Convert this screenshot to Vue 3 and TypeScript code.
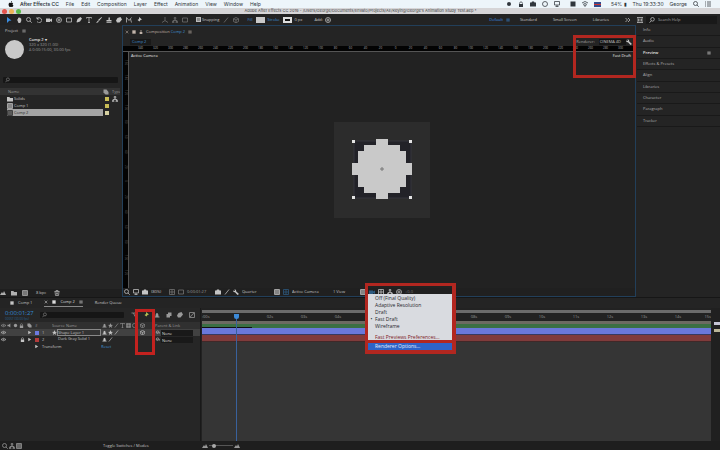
<script setup lang="ts">
import { h, ref } from 'vue'

type Glyph = { d: string; solid?: boolean }

const glyphs: Record<string, Glyph> = {
  apple: { d: 'M8 0C8 2 7 3 6 3C6 1 7 0 8 0ZM6 4C8 2.600 10 3.500 10.500 4.500C8.500 6 9 8 11 9C10 11 9 12 8 12C7 12 7 11.500 6 11.500C5 11.500 5 12 4 12C2 12 0 6 2 4.300C3.500 3 5 4 6 4Z', solid: true },
  arrow: { d: 'M2 0L11 7L6.500 7.500L2 12Z', solid: true },
  hand: { d: 'M2 5L3 4L4 6V2L5 1L6 2L7 0.500L8 2L9 1.500L9.500 3L10.500 3.500V8L8.500 12H5Z', solid: true },
  zoom: { d: 'M5 1A4 4 0 1 0 5 9A4 4 0 1 0 5 1M8 8L11.500 11.500' },
  search: { d: 'M7 1A3.600 3.600 0 1 1 7 8.200A3.600 3.600 0 1 1 7 1M4.500 7.500L1 11.500' },
  rotate: { d: 'M2 4A5 5 0 1 1 2 9M2 0V4H6' },
  camera: { d: 'M0 3H8V5L12 3V10L8 8V10H0Z', solid: true },
  target: { d: 'M6 1A5 5 0 1 0 6 11A5 5 0 1 0 6 1M6 3V9M3 6H9' },
  rect: { d: 'M1 2H11V10H1Z' },
  pen: { d: 'M9 0L12 3L8 9L2 11L1 10L3 4ZM1 11L6 6', solid: true },
  type: { d: 'M1 3V1H11V3M6 1V11M4 11H8' },
  brush: { d: 'M11 0L12 1L6 8L4 6ZM4 7L5.500 9Q4 12 0 11.500Q2 10 4 7Z', solid: true },
  stamp: { d: 'M5 1H8L7.500 6H11V9H1V6H5ZM1 10H11V11.500H1Z', solid: true },
  eraser: { d: 'M3 2L9 0L12 5L7 11H2L0 7Z', solid: true },
  roto: { d: 'M1 11V1L6 7L11 1M9 4L11 11' },
  pin: { d: 'M6 0L12 5L9 6L7 9L3 6L6 4ZM4 7L1 12', solid: true },
  axis: { d: 'M6 7V0M6 7L0 11M6 7L12 11' },
  nodes: { d: 'M6 4V7M2 9V7H10V9M4.500 1H7.500V4H4.500ZM.800 9H3.800V11.500H.800ZM8 9H11V11.500H8Z' },
  square: { d: 'M1 1H11V11H1Z', solid: true },
  circle: { d: 'M6 1A5 5 0 1 0 6 11A5 5 0 1 0 6 1Z' },
  dot: { d: 'M6 2A4 4 0 1 0 6 10A4 4 0 1 0 6 2Z', solid: true },
  menu: { d: 'M1 3H11M1 6H11M1 9H11' },
  list: { d: 'M0 2H2M4 2H12M0 6H2M4 6H12M0 10H2M4 10H12' },
  close: { d: 'M2 2L10 10M10 2L2 10' },
  more: { d: 'M1 2L5 6L1 10M6 2L10 6L6 10' },
  panel: { d: 'M0 1H12V11H0ZM3 3V9M6 3V9M9 3V9' },
  folder: { d: 'M0 2H5L6 4H12V11H0Z', solid: true },
  comp: { d: 'M1 1H11V11H1ZM4 1V11M8 1V11M1 4H11M1 8H11' },
  tag: { d: 'M1 1H7L11 6V11H5L1 7Z', solid: true },
  trash: { d: 'M1 3H11M4 3V1H8V3M2 3L3 11H9L10 3M5 5V9M7 5V9' },
  screen: { d: 'M1 1H11V8H1ZM6 8V11M3 11H9' },
  snapshot: { d: 'M0 3H3L4 1H8L9 3H12V11H0Z', solid: true },
  wrench: { d: 'M3 0L4 3L3 4L0 3Q0 7 4 6.500L9 12L12 10L6.500 5Q7 1 3 0Z', solid: true },
  grid: { d: 'M1 1H11V11H1ZM6 1V11M1 6H11' },
  eye: { d: 'M0 6Q6 0 12 6Q6 12 0 6M6 4V8' },
  lock: { d: 'M2 6H10V12H2ZM3 6V3Q6-1 9 3V6H8V3.500Q6 1.500 4 3.500V6Z', solid: true },
  speaker: { d: 'M1 4H4L8 1V11L4 8H1Z', solid: true },
  star: { d: 'M6 0L7.500 4L12 4.500L8.500 7L10 12L6 9L2 12L3.500 7L0 4.500L4.500 4Z', solid: true },
  slash: { d: 'M2 11L10 1' },
  cube: { d: 'M6 1L11 3.500V9L6 11.500L1 9V3.500ZM1 3.500L6 6L11 3.500M6 6V11' },
  right: { d: 'M3 2L10 6L3 10Z', solid: true },
  swirl: { d: 'M6 6Q8 4 8 7Q6 10 3 7Q2 2 7 2Q12 4 10 9' },
  graph: { d: 'M1 1H11V11H1ZM2 9Q5 9 6 6Q7 3 10 3' },
  shy: { d: 'M1 9H11V11H1ZM3 9Q3 2 6 2Q9 2 9 9Z', solid: true },
  blur: { d: 'M4 1H11V8H8V11H1V4H4Z', solid: true },
  flow: { d: 'M1 2H5L8 9H11M5 2L8 2' },
  wifi: { d: 'M0 4Q6-2 12 4M2 7Q6 3 10 7M4 9Q6 7 8 9L6 11Z' },
  mountain: { d: 'M0 10L4 4L6 7L8 2L12 10Z', solid: true },
}

const Ico = (props: { n: string }) => {
  const g = glyphs[props.n]
  return h('svg', { viewBox: '0 0 12 12', class: 'ico', 'aria-hidden': 'true' }, [
    h('path', { d: g.d, fill: g.solid ? 'currentColor' : 'none', stroke: g.solid ? 'none' : 'currentColor', 'stroke-width': 1.5 }),
  ])
}
Ico.props = ['n']

const menus = ['File', 'Edit', 'Composition', 'Layer', 'Effect', 'Animation', 'View', 'Window', 'Help']
const tools = ['arrow', 'hand', 'zoom', 'rotate', 'camera', 'target', 'rect', 'pen', 'type', 'brush', 'stamp', 'eraser', 'roto', 'pin']
const workspaces = ['Standard', 'Small Screen', 'Libraries']
const panels = ['Info', 'Audio', 'Preview', 'Effects & Presets', 'Align', 'Libraries', 'Character', 'Paragraph', 'Tracker']
const assets = [
  { name: 'Solids', icon: 'folder' },
  { name: 'Comp 1', icon: 'comp' },
  { name: 'Comp 2', icon: 'comp' },
]
const viewMarks = Array.from({ length: 33 }, (_, i) => Math.abs(i * 20 - 340))
const sideMarks = Array.from({ length: 15 }, (_, i) => Math.abs(i * 20 - 160))
const timeMarks = [':00s', '', '02s', '03s', '04s', '', '', '', '08s', '09s', '10s', '11s', '12s', '13s', '14s', '15s']
const layers = [
  { id: 1, name: 'Shape Layer 1', color: 'blue' },
  { id: 2, name: 'Dark Gray Solid 1', color: 'red' },
]
const previewModes = ['Off (Final Quality)', 'Adaptive Resolution', 'Draft', 'Fast Draft', 'Wireframe']
const mode = ref('Fast Draft')
const selectedAsset = ref('Comp 2')
const snapping = ref(true)
</script>

<template>
  <div class="app">
    <header class="menubar">
      <Ico n="apple" class="apple" />
      <nav class="menus">
        <button class="brand">After Effects CC</button>
        <button v-for="m in menus" :key="m">{{ m }}</button>
      </nav>
      <div class="status">
        <div class="tray"><Ico n="dot" /><Ico n="lock" /><Ico n="snapshot" /><Ico n="circle" /><Ico n="screen" /></div>
        <div class="tray"><Ico n="square" /><Ico n="wifi" /><span class="flag"></span></div>
        <span>54% ▮</span>
        <span>Thu 19:33:30</span>
        <span>George</span>
        <div class="tray"><Ico n="zoom" /><Ico n="list" /></div>
      </div>
    </header>

    <div class="titlebar">
      <span class="light close"></span><span class="light mini"></span><span class="light full"></span>
      <span class="doc">Adobe After Effects CC 2019 - /Users/George/Documents/Envato/Projects/AE/Keying/George's Animation Study Test.aep *</span>
    </div>

    <div class="toolbar">
      <div class="tools">
        <button v-for="t in tools" :key="t" :class="{ on: t === 'arrow' }" :aria-label="t"><Ico :n="t" /></button>
      </div>
      <div class="tools dim"><Ico n="axis" /><Ico n="nodes" /><Ico n="rect" /></div>
      <label class="snap"><input v-model="snapping" type="checkbox" />Snapping</label>
      <div class="tools dim snapopts"><Ico n="slash" /><Ico n="cube" /></div>
      <div class="paint">
        <a href="#">Fill</a><button class="swatch" aria-label="Fill colour"></button>
        <a href="#">Stroke</a><button class="swatch stroke" aria-label="Stroke colour"></button>
        <span>0 px</span>
      </div>
      <div class="add">Add: <Ico n="target" /></div>
      <nav class="spaces">
        <button class="on">Default <Ico n="menu" /></button>
        <button v-for="w in workspaces" :key="w">{{ w }}</button>
        <span class="extras"><Ico n="more" /><Ico n="panel" /></span>
      </nav>
      <label class="help"><Ico n="search" /><input type="text" placeholder="Search Help" aria-label="Search Help" /></label>
    </div>

    <main class="work">
      <section class="project">
        <div class="phead">Project <Ico n="menu" /></div>
        <div class="info">
          <span class="thumb"></span>
          <div><b>Comp 2 ▾</b><p>320 x 320 (1.00)</p><p>Δ 0:00:15:00, 30.00 fps</p></div>
        </div>
        <label class="find"><Ico n="search" /><input type="text" aria-label="Search project" /></label>
        <table class="assets">
          <colgroup><col /><col class="ctag" /><col class="ctype" /></colgroup>
          <thead><tr><th>Name</th><th><Ico n="tag" /></th><th>Type</th></tr></thead>
          <tbody>
            <tr v-for="a in assets" :key="a.name" :class="{ sel: a.name === selectedAsset }" @click="selectedAsset = a.name">
              <td><span class="asset"><Ico :n="a.icon" />{{ a.name }}</span></td>
              <td><span class="chip"></span></td>
              <td><Ico v-if="a.icon === 'folder'" n="nodes" /></td>
            </tr>
          </tbody>
        </table>
        <div class="pfoot"><Ico n="mountain" /><Ico n="folder" /><Ico n="comp" /><span>8 bpc</span><Ico n="trash" /></div>
      </section>

      <section class="viewer">
        <div class="vtabs"><Ico n="close" /><Ico n="square" /><Ico n="lock" /><span>Composition <a href="#">Comp 2</a></span><Ico n="menu" /></div>
        <div class="crumbs">
          <button class="crumb">Comp 2</button>
          <span class="renderer">Renderer:</span><button class="engine">CINEMA 4D</button><Ico n="wrench" />
        </div>
        <div class="hruler"><span v-for="(m, i) in viewMarks" :key="i">{{ m }}</span></div>
        <div class="stage">
          <div class="vruler"><span v-for="(m, i) in sideMarks" :key="i">{{ m }}</span></div>
          <div class="canvas">
            <div class="labels"><span>Active Camera</span><span>Fast Draft</span></div>
            <svg class="art" viewBox="0 0 96 96" role="img" aria-label="Pixelated circle">
              <rect width="96" height="96" fill="#2c2c2c" />
              <rect x="20" y="19" width="57" height="57" fill="#222228" stroke="#34343c" />
              <path fill="#c9c9c9" d="M42 17h12v6h12v6h6v12h6v12h-6v12h-6v6h-12v6h-12v-6h-12v-6h-6v-12h-6v-12h6v-12h6v-6h12z" />
              <path fill="#e4e4e4" d="M18 18h3v3h-3zM75 18h3v3h-3zM18 74h3v3h-3zM75 74h3v3h-3z" />
              <path stroke="#777" fill="none" d="M46 47h4M48 45v4" />
            </svg>
          </div>
        </div>
        <div class="vbar">
          <div class="vgroup"><Ico n="zoom" /><Ico n="screen" /><Ico n="snapshot" /></div>
          <select class="zoomsel" aria-label="Magnification"><option>(80%)</option></select>
          <div class="vgroup dim"><Ico n="grid" /><Ico n="rect" /></div>
          <button class="tc">0:00:01:27</button>
          <div class="vgroup"><Ico n="snapshot" /><Ico n="slash" /><Ico n="wrench" /></div>
          <select class="res" aria-label="Resolution"><option>Quarter</option></select>
          <div class="vgroup"><Ico n="comp" /><Ico n="grid" class="teal" /></div>
          <select class="cam" aria-label="Camera"><option>Active Camera</option></select>
          <select class="views" aria-label="View layout"><option>1 View</option></select>
          <div class="vgroup previews"><Ico n="comp" /><Ico n="camera" class="teal" /><Ico n="grid" /><Ico n="nodes" /><Ico n="target" /></div>
          <span class="dim">+0.0</span>
        </div>
        <div class="mark renderer-mark"></div>
        <div class="popup" role="menu">
          <button v-for="p in previewModes" :key="p" role="menuitemradio" :aria-checked="p === mode" @click="mode = p">
            <i>{{ p === mode ? '•' : '' }}</i>{{ p }}
          </button>
          <button class="prefs" role="menuitem"><i></i>Fast Previews Preferences...</button>
          <button class="chosen" role="menuitem"><i></i>Renderer Options...</button>
        </div>
        <div class="mark popup-mark"></div>
      </section>

      <aside class="side">
        <button v-for="p in panels" :key="p" :class="{ on: p === 'Preview' }">{{ p }}<Ico v-if="p === 'Preview'" n="menu" /></button>
      </aside>
    </main>

    <section class="timeline">
      <div class="tabs">
        <button><Ico n="square" />Comp 1</button>
        <button class="on"><Ico n="close" /><Ico n="square" />Comp 2 <Ico n="menu" /></button>
        <button>Render Queue</button>
      </div>
      <div class="tbody">
        <div class="left">
          <div class="thead">
            <div class="clock"><b>0:00:01:27</b><small>00057 (30.00 fps)</small></div>
            <label class="find"><Ico n="search" /><input type="text" aria-label="Search layers" /></label>
            <div class="tools2"><Ico n="flow" /><Ico n="pin" class="lime" /><Ico n="shy" /><Ico n="blur" /><Ico n="eraser" /><Ico n="graph" /></div>
          </div>
          <table class="layers">
            <colgroup><col class="c-av" /><col class="c-id" /><col class="c-name" /><col class="c-sw" /><col class="c-3d" /><col class="c-par" /></colgroup>
            <thead>
              <tr>
                <th><span class="icons"><Ico n="eye" /><Ico n="speaker" /><Ico n="dot" /><Ico n="lock" /></span></th>
                <th><span class="icons"><Ico n="tag" />#</span></th>
                <th>Source Name</th>
                <th><span class="icons"><Ico n="shy" /><Ico n="star" /><Ico n="slash" /><Ico n="type" /><Ico n="comp" /><Ico n="circle" /></span></th>
                <th><Ico n="cube" /></th>
                <th>Parent &amp; Link</th>
              </tr>
            </thead>
            <tbody>
              <tr v-for="l in layers" :key="l.id" :class="{ sel: l.id === 1 }">
                <td><span class="icons"><Ico n="eye" /><Ico v-if="l.id === 2" n="lock" class="push" /></span></td>
                <td><span class="icons"><Ico n="right" /><span class="chip" :class="l.color"></span>{{ l.id }}</span></td>
                <td><span class="lname" :class="{ boxed: l.id === 1 }"><Ico v-if="l.id === 1" n="star" /><em>{{ l.name }}</em></span></td>
                <td><span class="icons"><Ico n="shy" /><Ico v-if="l.id === 1" n="star" /><Ico n="slash" /></span></td>
                <td><Ico v-if="l.id === 1" n="cube" /></td>
                <td><span class="parent"><Ico n="swirl" /><select :aria-label="'Parent of ' + l.name"><option>None</option></select></span></td>
              </tr>
              <tr class="prop">
                <td></td>
                <td colspan="2"><span class="transform"><Ico n="right" />Transform</span></td>
                <td colspan="3"><a href="#">Reset</a></td>
              </tr>
            </tbody>
          </table>
          <div class="mark switch-mark"></div>
        </div>
        <div class="right">
          <div class="nav"></div>
          <div class="seconds"><span v-for="(s, i) in timeMarks" :key="i">{{ s }}</span></div>
          <div class="area"></div>
          <div class="cache"></div>
          <div class="bar blue"></div>
          <div class="bar red"></div>
          <div class="tracks"></div>
          <div class="playhead"></div>
        </div>
        <div class="gutter"><span class="knob"></span><span class="knob warm"></span></div>
      </div>
      <footer class="tfoot">
        <div class="tf-left"><Ico n="zoom" /><Ico n="nodes" /><Ico n="comp" /></div>
        <button>Toggle Switches / Modes</button>
        <div class="scale"><Ico n="mountain" /><input type="range" value="14" aria-label="Timeline zoom" /><Ico n="mountain" /></div>
      </footer>
    </section>
  </div>
</template>

<style>
body {
  margin: 0;
  background: #222;
}
</style>

<style scoped>
* { box-sizing: border-box; }
.app {
  min-height: 100vh;
  display: flex;
  flex-direction: column;
  background: #222;
  color: #c4c4c4;
  font: 4px/6px "Open Sans", "Noto Sans", sans-serif;
  overflow: hidden;
}
button, input, select {
  font: inherit;
  color: inherit;
  background: none;
  border: 0;
  padding: 0;
  margin: 0;
  border-radius: 0;
  appearance: none;
  min-width: 0;
  outline: 0;
}
button { white-space: nowrap; text-align: left; }
a { color: #3f8fd2; text-decoration: none; }
p { margin: 0; }
.ico { width: 6px; height: 6px; flex: none; display: block; }
.dim { color: #666; }
.teal { color: #2c5a80; }
.lime { color: #b5bd54; }

.menubar {
  height: 8px;
  display: flex;
  align-items: center;
  padding: 0 9px 0 8px;
  background: #edf5fa;
  color: #30363c;
  font-family: Inter, sans-serif;
  font-size: 5px;
  line-height: 8px;
}
.apple { margin-right: 6px; color: #111; }
.menus { display: flex; gap: 7px; }
.brand { font-weight: 600; }
.status { margin-left: auto; display: flex; align-items: center; gap: 6px; white-space: nowrap; }
.tray { display: flex; align-items: center; gap: 6px; margin-right: 4px; }
.status > .tray:last-child { margin: 0; }
.flag { width: 7px; height: 5px; background: linear-gradient(#354a8a 33%, #c33 33% 66%, #354a8a 66%); }

.titlebar {
  height: 6px;
  display: flex;
  align-items: center;
  gap: 2px;
  padding: 0 22px 0 2px;
  background: #d6d5d7;
  color: #444;
  font-family: Inter, sans-serif;
}
.light { width: 5px; height: 5px; border-radius: 50%; background: #e4544c; }
.mini { background: #ecb456; }
.full { background: #57b947; }
.doc { flex: 1; text-align: center; white-space: nowrap; }

.toolbar {
  height: 11px;
  display: flex;
  align-items: center;
  background: #232323;
  padding: 0 3px 0 6px;
  white-space: nowrap;
}
.tools { display: flex; gap: 4px; color: #c4c4c4; }
.tools.dim { color: #737373; margin-left: 20px; }
.tools.dim.snapopts { margin-left: 4px; }
.tools .on { color: #3b8de0; }
.snap { display: flex; align-items: center; gap: 1px; margin-left: 8px; }
.snap input { width: 5px; height: 5px; border: 1px solid #bbb; }
.snap input:checked { background: #888; }
.paint { display: flex; align-items: center; gap: 3px; margin-left: 8px; }
.swatch { width: 9px; height: 6px; background: #c9c9c9; }
.swatch.stroke { background: #111; border: 2px solid #ddd; }
.add { display: flex; align-items: center; gap: 2px; margin-left: 12px; }
.spaces { display: flex; align-items: center; gap: 16px; margin-left: auto; }
.extras { display: flex; gap: 6px; }
.spaces .on { display: flex; align-items: center; gap: 3px; color: #3b8de0; }
.spaces .on .ico { width: 4px; height: 4px; margin-right: -6px; }
.help { display: flex; align-items: center; gap: 3px; width: 71px; height: 8px; margin-left: 3px; padding: 0 3px; background: #191919; }
.help input { flex: 1; }
.help input::placeholder { color: #aaa; opacity: 1; }

.work {
  height: 272px;
  display: grid;
  grid-template-columns: 122px minmax(0, 1fr) 84px;
  grid-template-rows: minmax(0, 1fr);
  background: #242424;
}

.project { display: flex; flex-direction: column; background: #252525; overflow: hidden; }
.phead { display: flex; align-items: center; gap: 4px; height: 11px; padding-left: 5px; }
.phead .ico { width: 4px; }
.info { display: flex; gap: 5px; height: 41px; padding: 1px 0 0 5px; line-height: 5px; color: #9a9a9a; }
.info b { color: #e4e4e4; font-weight: 600; }
.thumb { width: 19px; height: 19px; margin-top: 3px; border-radius: 50%; background: #c9c9c9; }
.find { display: flex; align-items: center; height: 6px; background: #161616; border-radius: 1px; padding-left: 2px; color: #888; }
.find .ico { width: 5px; }
.find input { flex: 1; height: 5px; }
.project .find { margin: 0 4px 5px 3px; }
table { border-collapse: collapse; table-layout: fixed; width: 100%; }
th, td { padding: 0; height: 7px; font-weight: 400; text-align: left; white-space: nowrap; overflow: hidden; }
.assets { width: 120px; line-height: 7px; }
.assets .ctag { width: 9px; }
.assets .ctype { width: 8px; }
.assets thead { background: #333; color: #999; }
.assets th:first-child { padding-left: 8px; }
.asset { display: flex; align-items: center; gap: 1px; margin-left: 7px; }
.assets td:nth-child(2) { padding-left: 2px; }
.assets .sel .asset { background: #a4a4a4; color: #2a2a2a; }
.chip { display: block; width: 4px; height: 4px; background: #c9bd56; }
.sel .chip { background: #d6d0a0; }
.pfoot { display: flex; align-items: center; gap: 5px; margin-top: auto; height: 8px; background: #1f1f1f; }
.pfoot .ico { color: #b0b0b0; }
.pfoot span { padding: 0 3px; }

.viewer { position: relative; display: flex; flex-direction: column; border: 1px solid #223f5a; background: #242424; }
.vtabs { display: flex; align-items: center; gap: 3px; height: 11px; padding-left: 2px; color: #c2b4aa; }
.vtabs .ico { width: 4px; }
.crumbs { display: flex; align-items: center; height: 9px; padding: 0 3px 0 7px; }
.crumb { color: #3f8fd2; background: #191919; padding: 0 5px 0 2px; }
.renderer { margin-left: auto; margin-right: 4px; color: #aaa; }
.engine { background: #151515; padding: 0 5px 0 1px; }
.hruler {
  display: flex;
  height: 6px;
  padding-left: 10px;
  overflow: hidden;
  background: #030303;
  color: #aaa;
  border-bottom: 1px solid #555;
  font-size: 3px;
  line-height: 5px;
}
.hruler span { flex: 0 0 15px; text-align: center; }
.stage { flex: 1; display: flex; min-height: 0; }
.vruler { width: 6px; padding-top: 8px; overflow: hidden; background: #030303; color: #555; border-right: 1px solid #555; font-size: 3px; }
.vruler span { display: block; writing-mode: vertical-rl; height: 15px; width: 5px; line-height: 5px; }
.canvas { flex: 1; display: flex; flex-direction: column; background: #222; }
.labels { display: flex; justify-content: space-between; padding: 1px 4px 0 2px; color: #eee; }
.art { width: 96px; height: 96px; margin: 63px auto 0; flex: none; }
.vbar { display: flex; align-items: center; height: 8px; padding-left: 1px; background: #202020; white-space: nowrap; }
.vgroup { display: flex; gap: 3px; margin-right: 3px; }
.vbar .dim { color: #777; }
.zoomsel { width: 18px; }
.tc { width: 28px; color: #999; }
.res { width: 32px; }
.cam { width: 41px; }
.views { width: 27px; }

.mark { position: absolute; border: 3px solid #b22720; pointer-events: none; }
.renderer-mark { top: 9px; right: -1px; width: 63px; height: 43px; }
.popup-mark { left: 242px; top: 257px; width: 91px; height: 71px; border-width: 3px 4px 4px 3px; z-index: 3; }
.switch-mark { left: 135px; top: 1px; width: 20px; height: 46px; border-color: #c3221f; }

.popup {
  position: absolute;
  z-index: 2;
  left: 245px;
  top: 268px;
  width: 84px;
  display: flex;
  flex-direction: column;
  background: #d9dbe0;
  color: #26272c;
  font-size: 5px;
  line-height: 7px;
  padding-top: 1px;
}
.popup button { display: flex; height: 7px; }
.popup i { width: 7px; text-align: center; font-style: normal; }
.popup .prefs { height: 13px; padding-top: 4px; color: #7d1a1e; border-bottom: 3px solid #b22720; }
.popup .chosen { height: 7px; color: #e8eefa; background: #2d63c8; line-height: 6px; }

.side { display: grid; grid-auto-rows: 1fr; height: 102px; background: #242424; margin-left: 1px; }
.side button { display: flex; align-items: center; justify-content: space-between; padding: 0 9px 0 6px; border-bottom: 1px solid #191919; color: #b0b0b0; }
.side .on { color: #e4e4e4; font-weight: 600; }
.side .ico { width: 4px; }

.timeline { flex: 1; display: flex; flex-direction: column; background: #242424; border-top: 1px solid #161616; }
.tabs { display: flex; height: 10px; padding-left: 10px; }
.tabs button { display: flex; align-items: center; gap: 4px; height: 9px; margin-right: 12px; }
.tabs .ico { width: 4px; }
.tabs .on { color: #ddd; border-bottom: 1px solid #888; }
.tbody { flex: 1; display: grid; grid-template-columns: 201px minmax(0, 1fr) 9px; }
.left { position: relative; border-right: 1px solid #191919; background: #262626; }
.thead { display: flex; align-items: center; height: 14px; padding: 0 5px; }
.clock { width: 35px; line-height: 5px; color: #3289d0; }
.clock b { display: block; font-size: 6px; line-height: 7px; font-weight: 400; }
.clock small { display: block; font-size: 3px; line-height: 4px; color: #28628f; }
.thead .find { width: 84px; }
.tools2 { display: flex; justify-content: space-between; flex: 1; padding-left: 7px; color: #999; }
.layers { line-height: 7px; }
.layers .ico { width: 5px; height: 5px; }
.layers thead { background: #303030; color: #999; }
.layers .sel { background: #414141; }
.c-av { width: 26px; }
.c-id { width: 26px; }
.c-name { width: 49px; }
.c-sw { width: 39px; }
.c-3d { width: 15px; }
.icons { display: flex; align-items: center; gap: 1px; padding-left: 1px; }
.layers td:nth-child(2) .icons, .layers th:nth-child(2) .icons { gap: 3px; }
.push { margin-left: 13px; }
.chip.blue { background: #6c7ae0; }
.chip.red { background: #b33b3b; }
.lname { display: flex; align-items: center; }
.lname em { flex: 1; font-style: normal; height: 7px; margin-left: 6px; line-height: 6px; }
.boxed em { margin-left: 0; border: 1px solid #888; background: #333; line-height: 5px; }
.parent { display: flex; align-items: center; gap: 1px; }
.parent select { width: 32px; background: #191919; height: 6px; padding-left: 1px; color: #ddd; }
.transform { display: flex; align-items: center; gap: 3px; padding-left: 8px; }

.right { position: relative; display: flex; flex-direction: column; padding-left: 1px; background: #222; overflow: hidden; }
.nav { height: 3px; margin-top: 2px; background: #6b6b6b; }
.seconds { display: flex; height: 8px; padding-top: 1px; color: #999; }
.seconds span { flex: 0 0 34px; text-align: center; }
.seconds span:first-child { flex-basis: 17px; text-align: left; }
.seconds span:last-child { flex: 1; text-align: right; }
.area { height: 3px; background: #6c6a62; }
.cache { height: 4px; background: linear-gradient(90deg, #111 50px, transparent 50px) 0 100% / 100% 1px no-repeat, #3b6f44; }
.bar { height: 7px; border-bottom: 1px solid #363a60; }
.bar.blue { background: #6a78da; }
.bar.red { background: #803b3b; border-color: #402828; }
.tracks { flex: 1; background: #353535; }
.playhead { position: absolute; left: 35px; top: 6px; bottom: 0; width: 1px; background: #39619c; }
.playhead::before { content: ''; display: block; width: 5px; height: 5px; margin-left: -2px; border-radius: 0 0 3px 3px; background: #3c8ad8; }
.gutter { display: flex; flex-direction: column; gap: 4px; padding: 14px 0 0 3px; background: #202020; }
.knob { height: 3px; background: #c5c5d5; }
.knob.warm { background: #bab598; }
.tfoot { height: 9px; display: grid; grid-template-columns: 103px 99px 1fr; align-items: center; background: #1e1e1e; }
.tf-left { display: flex; gap: 1px; padding-left: 2px; color: #999; }
.scale { display: flex; align-items: center; gap: 1px; color: #999; }
.scale input { width: 24px; height: 5px; background: linear-gradient(#555, #555) 0 2px / 100% 1px no-repeat; }
.scale input::-webkit-slider-thumb { appearance: none; width: 4px; height: 4px; border-radius: 50%; background: #aaa; }
</style>
